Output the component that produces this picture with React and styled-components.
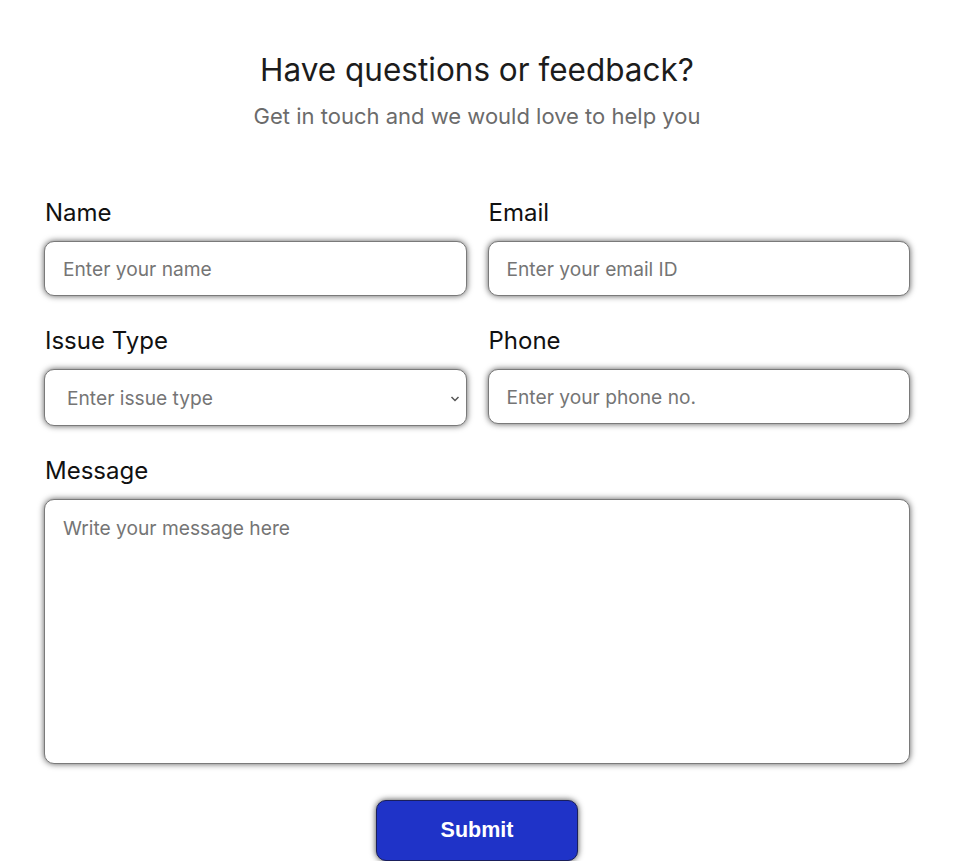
import React from 'react';
import styled, { createGlobalStyle } from 'styled-components';

const GlobalStyle = createGlobalStyle`
    body {
        margin: 0;
        background: #ffffff;
        font-family: 'Inter', 'Noto Sans', sans-serif;
    }
`;

const Page = styled.div`
    width: 866px;
    margin: 0 auto;
    padding-top: 50px;
`;

const Header = styled.header`
    text-align: center;
    margin-bottom: 67px;
`;

const Title = styled.h1`
    margin: 0;
    font-size: 31.5px;
    font-weight: 400;
    line-height: 40px;
    color: #1c1c1c;
`;

const Subtitle = styled.p`
    margin: 11px 0 0;
    font-size: 22px;
    line-height: 30px;
    color: #6b6b6b;
`;

const Form = styled.form`
    display: grid;
    grid-template-columns: 1fr 1fr;
    column-gap: 21px;
    row-gap: 30px;
`;

const Field = styled.div`
    display: flex;
    flex-direction: column;
    gap: 13px;
    grid-column: ${props => (props.wide ? '1 / -1' : 'auto')};
`;

const Label = styled.label`
    font-size: 24px;
    line-height: 30px;
    color: #111;
    padding-left: 1px;
`;

const boxStyle = `
    box-sizing: border-box;
    width: 100%;
    border: 1px solid #7a7a7a;
    border-radius: 10px;
    box-shadow: 0 0 6px rgba(0, 0, 0, 0.65);
    background: #fff;
    font-family: 'Inter', 'Noto Sans', sans-serif;
    font-size: 19.2px;
    color: #333;
    outline: none;
    &::placeholder {
        color: #757575;
    }
`;

const Input = styled.input`
    ${boxStyle}
    height: 55px;
    padding: 0 18px;
`;

const SelectWrap = styled.div`
    position: relative;
`;

const Select = styled.select`
    ${boxStyle}
    height: 57px;
    padding: 0 40px 0 22px;
    appearance: none;
    color: #757575;
`;

const Chevron = styled.svg`
    position: absolute;
    right: 7px;
    top: 50%;
    margin-top: -3px;
    width: 10px;
    height: 8px;
    pointer-events: none;
`;

const TextArea = styled.textarea`
    ${boxStyle}
    height: 265px;
    padding: 16px 18px;
    resize: none;
`;

const Actions = styled.div`
    grid-column: 1 / -1;
    display: flex;
    justify-content: center;
    margin-top: 6px;
`;

const SubmitButton = styled.button`
    width: 202px;
    height: 61px;
    border: 1px solid #1a1f5c;
    border-radius: 10px;
    background: #1f33c8;
    box-shadow: 0 0 6px rgba(0, 0, 0, 0.75);
    color: #fff;
    font-family: 'Liberation Sans', Arial, sans-serif;
    font-weight: 700;
    font-size: 21.5px;
    cursor: pointer;
`;

export default function App() {
    return (
        <>
            <GlobalStyle />
            <Page>
                <Header>
                    <Title>Have questions or feedback?</Title>
                    <Subtitle>Get in touch and we would love to help you</Subtitle>
                </Header>
                <Form onSubmit={e => e.preventDefault()}>
                    <Field>
                        <Label htmlFor="name">Name</Label>
                        <Input id="name" placeholder="Enter your name" />
                    </Field>
                    <Field>
                        <Label htmlFor="email">Email</Label>
                        <Input id="email" placeholder="Enter your email ID" />
                    </Field>
                    <Field>
                        <Label htmlFor="issue">Issue Type</Label>
                        <SelectWrap>
                            <Select id="issue" defaultValue="">
                                <option value="" disabled>Enter issue type</option>
                                <option value="bug">Bug</option>
                                <option value="billing">Billing</option>
                                <option value="other">Other</option>
                            </Select>
                            <Chevron viewBox="0 0 10 8">
                                <path d="M1.5 2 L5 5.5 L8.5 2" fill="none" stroke="#555" strokeWidth="1.5" />
                            </Chevron>
                        </SelectWrap>
                    </Field>
                    <Field>
                        <Label htmlFor="phone">Phone</Label>
                        <Input id="phone" placeholder="Enter your phone no." />
                    </Field>
                    <Field wide>
                        <Label htmlFor="message">Message</Label>
                        <TextArea id="message" placeholder="Write your message here" />
                    </Field>
                    <Actions>
                        <SubmitButton type="submit">Submit</SubmitButton>
                    </Actions>
                </Form>
            </Page>
        </>
    );
}
